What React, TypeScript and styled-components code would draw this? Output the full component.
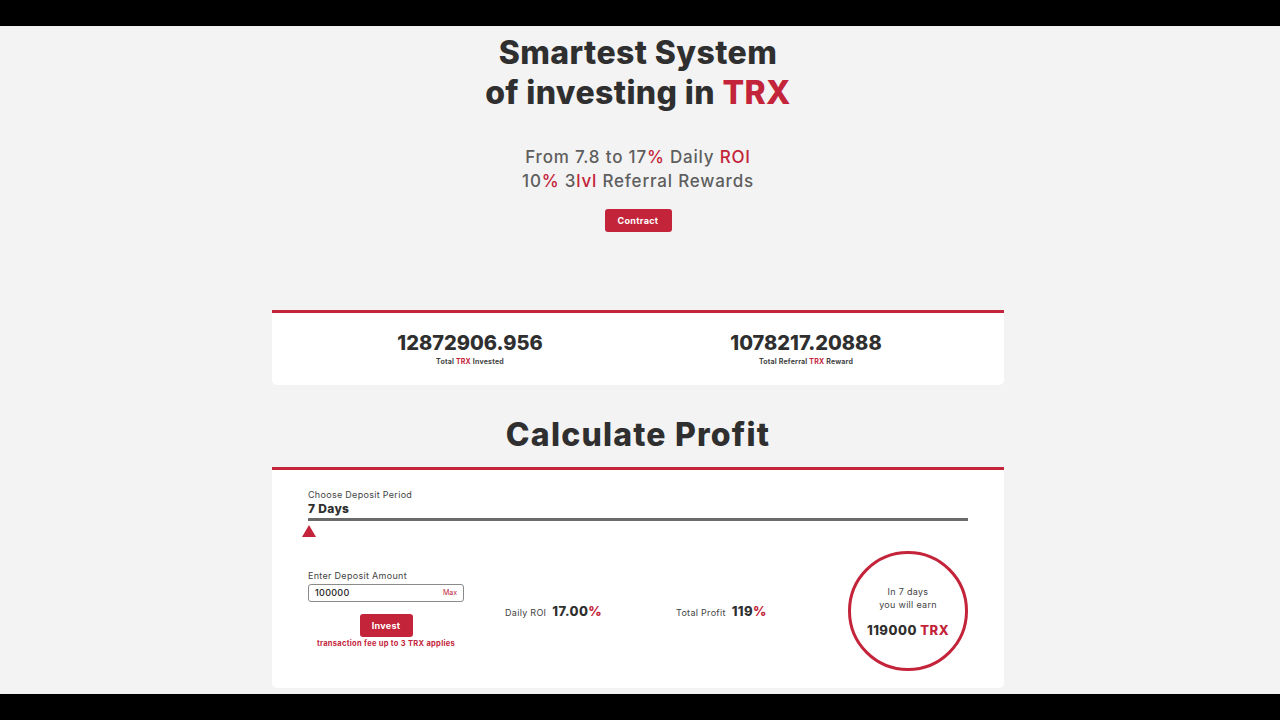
import React from "react";
import styled, { createGlobalStyle } from "styled-components";

const RED = "#c3243a";
const INK = "#2f2f2f";

const GlobalStyle = createGlobalStyle`
  html, body {
    margin: 0;
    padding: 0;
    background: #000;
  }
  body {
    font-family: "Inter", "Liberation Sans", sans-serif;
    color: ${INK};
  }
  * {
    box-sizing: border-box;
  }
`;

const Screen = styled.div`
  width: 1280px;
  height: 720px;
  display: flex;
  flex-direction: column;
  background: #000;
  overflow: hidden;
`;

const Letterbox = styled.div`
  height: 26px;
  flex: none;
  background: #000;
`;

const Viewport = styled.main`
  flex: 1;
  overflow: hidden;
  background: #f3f3f3;
  display: flex;
  flex-direction: column;
  align-items: center;
  padding-right: 4px;
`;

const Hero = styled.section`
  display: flex;
  flex-direction: column;
  align-items: center;
  padding-top: 7px;
`;

const Title = styled.h1`
  margin: 0;
  font-size: 32px;
  line-height: 40px;
  font-weight: 800;
  text-align: center;
  letter-spacing: 0.4px;
  color: ${INK};
`;

const Accent = styled.span`
  color: ${RED};
`;

const Tagline = styled.p`
  margin: 32px 0 0;
  font-size: 17px;
  line-height: 24px;
  font-weight: 500;
  text-align: center;
  color: #5e5e5e;
  letter-spacing: 0.8px;
`;

const RedButton = styled.button`
  border: none;
  border-radius: 3px;
  background: ${RED};
  color: #fff;
  font-family: inherit;
  font-weight: 700;
  font-size: 9px;
  letter-spacing: 0.3px;
  height: 23px;
  padding: 0;
  cursor: pointer;
`;

const ContractButton = styled(RedButton)`
  margin-top: 16px;
  width: 67px;
`;

const Container = styled.div`
  width: 732px;
  display: flex;
  flex-direction: column;
`;

const Card = styled.div`
  background: #fff;
  border-top: 3px solid ${RED};
  border-radius: 0 0 5px 5px;
`;

const StatsCard = styled(Card)`
  margin-top: 78px;
  height: 75px;
  padding: 0 30px;
  display: grid;
  grid-template-columns: 1fr 1fr;
  align-items: start;
`;

const Stat = styled.div`
  display: flex;
  flex-direction: column;
  align-items: center;
  padding-top: 18px;
`;

const StatValue = styled.div`
  font-size: 20px;
  line-height: 24px;
  font-weight: 800;
  color: ${INK};
`;

const StatLabel = styled.div`
  margin-top: 2px;
  font-size: 7px;
  font-weight: 700;
  letter-spacing: 0.2px;
  color: #444;
`;

const SectionTitle = styled.h2`
  margin: 32px 0 0;
  font-size: 32px;
  line-height: 36px;
  font-weight: 800;
  text-align: center;
  letter-spacing: 1.2px;
  color: ${INK};
`;

const CalcCard = styled(Card)`
  margin-top: 14px;
  padding: 19px 36px 17px;
`;

const SmallLabel = styled.div`
  font-size: 9px;
  line-height: 12px;
  color: #444;
  letter-spacing: 0.3px;
`;

const PeriodValue = styled.div`
  font-size: 12px;
  line-height: 16px;
  font-weight: 800;
  letter-spacing: 0.3px;
  color: ${INK};
`;

const Track = styled.div`
  margin-top: 1px;
  height: 3px;
  background: #6a6a6a;
`;

const Thumb = styled.div`
  width: 0;
  height: 0;
  margin: 4px 0 0 -6px;
  border-left: 7px solid transparent;
  border-right: 7px solid transparent;
  border-bottom: 12px solid ${RED};
`;

const ResultRow = styled.div`
  margin-top: 14px;
  display: grid;
  grid-template-columns: 197px 171px 172px 120px;
  align-items: center;
`;

const AmountBlock = styled.div`
  width: 156px;
  display: flex;
  flex-direction: column;
  margin-top: -5px;
`;

const AmountField = styled.div`
  margin-top: 2px;
  height: 18px;
  border: 1px solid #8a8a8a;
  border-radius: 3px;
  display: flex;
  align-items: center;
  justify-content: space-between;
  padding: 0 6px;
`;

const AmountText = styled.span`
  font-size: 9px;
  font-weight: 500;
  letter-spacing: 0.3px;
  color: #222;
`;

const MaxLink = styled.span`
  font-size: 7px;
  color: ${RED};
`;

const InvestButton = styled(RedButton)`
  align-self: center;
  margin-top: 12px;
  width: 53px;
`;

const FeeNote = styled.div`
  margin-top: 2px;
  text-align: center;
  font-size: 7.5px;
  font-weight: 700;
  letter-spacing: 0.3px;
  color: ${RED};
`;

const Metric = styled.div`
  display: flex;
  align-items: baseline;
  gap: 6px;
`;

const MetricLabel = styled.span`
  font-size: 9px;
  letter-spacing: 0.3px;
  color: #444;
`;

const MetricValue = styled.span`
  font-size: 13px;
  font-weight: 800;
  letter-spacing: 0.4px;
  color: ${INK};
`;

const EarnCircle = styled.div`
  width: 120px;
  height: 120px;
  border: 3px solid ${RED};
  border-radius: 50%;
  display: flex;
  flex-direction: column;
  align-items: center;
  justify-content: center;
  text-align: center;
`;

const EarnCaption = styled.div`
  font-size: 9px;
  line-height: 13px;
  letter-spacing: 0.3px;
  color: #444;
`;

const EarnValue = styled.div`
  margin-top: 11px;
  font-size: 13px;
  font-weight: 800;
  letter-spacing: 0.5px;
  color: ${INK};
`;

export default function App() {
  return (
    <Screen>
      <GlobalStyle />
      <Letterbox />
      <Viewport>
        <Hero>
          <Title>
            Smartest System
            <br />
            of investing in <Accent>TRX</Accent>
          </Title>
          <Tagline>
            From 7.8 to 17<Accent>%</Accent> Daily <Accent>ROI</Accent>
            <br />
            10<Accent>%</Accent> 3<Accent>lvl</Accent> Referral Rewards
          </Tagline>
          <ContractButton>Contract</ContractButton>
        </Hero>

        <Container>
          <StatsCard>
            <Stat>
              <StatValue>12872906.956</StatValue>
              <StatLabel>
                Total <Accent>TRX</Accent> Invested
              </StatLabel>
            </Stat>
            <Stat>
              <StatValue>1078217.20888</StatValue>
              <StatLabel>
                Total Referral <Accent>TRX</Accent> Reward
              </StatLabel>
            </Stat>
          </StatsCard>

          <SectionTitle>Calculate Profit</SectionTitle>

          <CalcCard>
            <SmallLabel>Choose Deposit Period</SmallLabel>
            <PeriodValue>7 Days</PeriodValue>
            <Track />
            <Thumb />

            <ResultRow>
              <AmountBlock>
                <SmallLabel>Enter Deposit Amount</SmallLabel>
                <AmountField>
                  <AmountText>100000</AmountText>
                  <MaxLink>Max</MaxLink>
                </AmountField>
                <InvestButton>Invest</InvestButton>
                <FeeNote>transaction fee up to 3 TRX applies</FeeNote>
              </AmountBlock>

              <Metric>
                <MetricLabel>Daily ROI</MetricLabel>
                <MetricValue>
                  17.00<Accent>%</Accent>
                </MetricValue>
              </Metric>

              <Metric>
                <MetricLabel>Total Profit</MetricLabel>
                <MetricValue>
                  119<Accent>%</Accent>
                </MetricValue>
              </Metric>

              <EarnCircle>
                <EarnCaption>
                  In 7 days
                  <br />
                  you will earn
                </EarnCaption>
                <EarnValue>
                  119000 <Accent>TRX</Accent>
                </EarnValue>
              </EarnCircle>
            </ResultRow>
          </CalcCard>
        </Container>
      </Viewport>
      <Letterbox />
    </Screen>
  );
}
